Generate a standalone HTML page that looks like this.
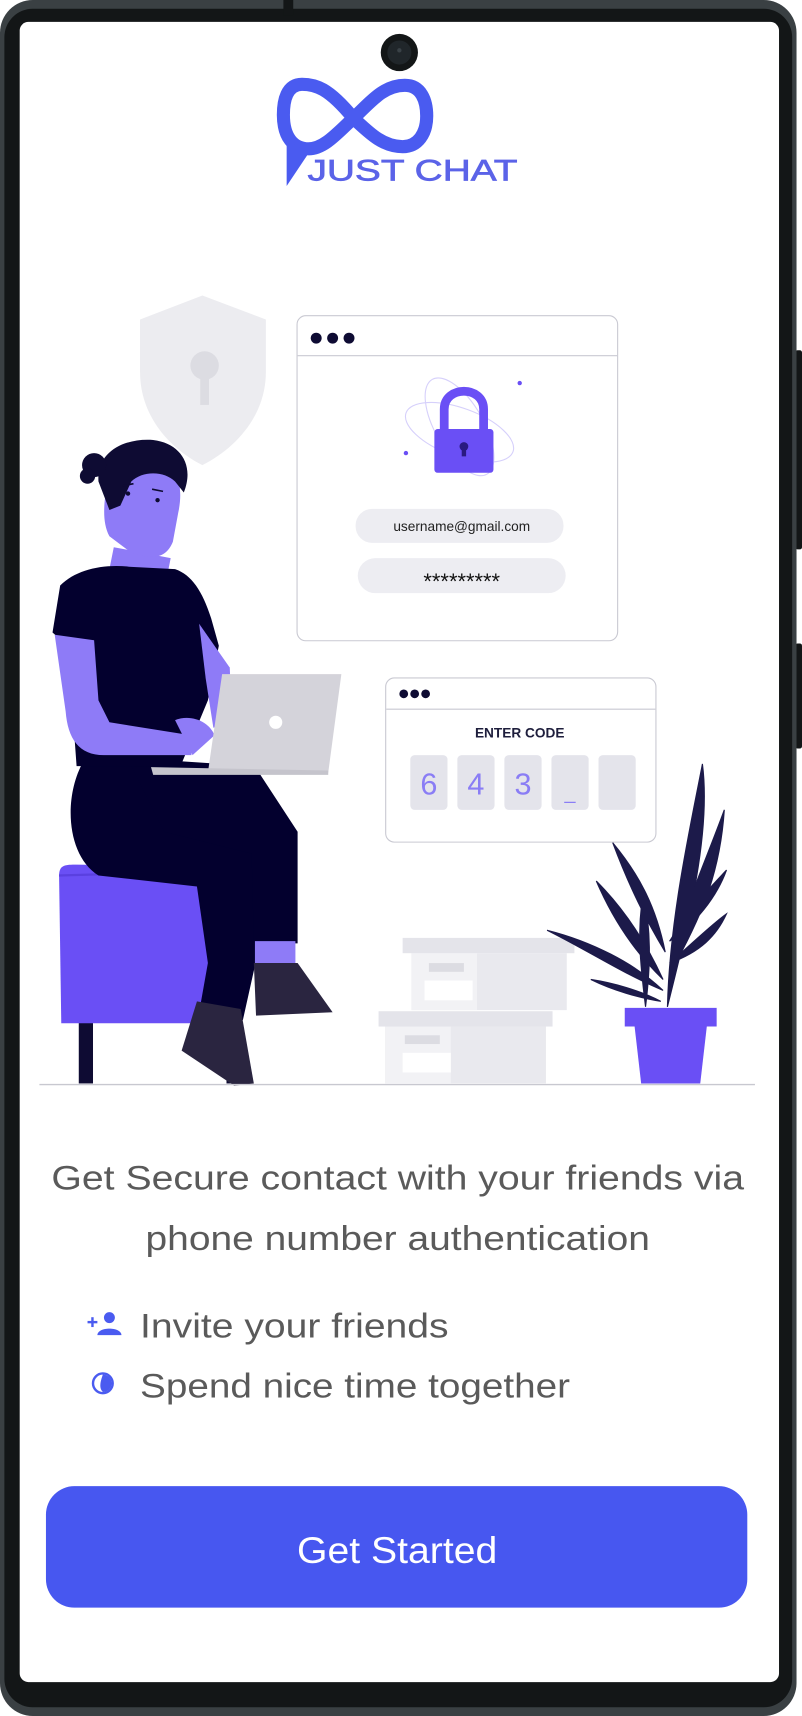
<!DOCTYPE html>
<html><head><meta charset="utf-8"><style>html,body{margin:0;padding:0;background:#fff}svg{display:block}</style></head>
<body>
<svg width="802" height="1716" viewBox="0 0 733 1568" preserveAspectRatio="none" xmlns="http://www.w3.org/2000/svg" font-family="Liberation Sans, sans-serif">
<rect x="0" y="0" width="733" height="1568" fill="#fff"/>
<rect x="727" y="320" width="6" height="182" rx="2" fill="#131617"/>
<rect x="727" y="588" width="6" height="96" rx="2" fill="#131617"/>
<rect x="0" y="0" width="728" height="1568" rx="30" fill="#3a4043"/>
<rect x="4" y="8" width="720" height="1552" rx="26" fill="#131617"/>
<rect x="259" y="0" width="9" height="14" fill="#131617"/>
<rect x="18" y="20" width="694" height="1517" rx="8" fill="#fff"/>
<circle cx="365" cy="48" r="17" fill="#131617"/><circle cx="365" cy="48" r="11" fill="#20262a"/><circle cx="365" cy="46" r="2" fill="#3a4247"/>
<!-- logo -->
<path d="M323 108 C300 80 288 77 276 77 C262 77 259 92 259 105 C259 125 268 136 282 136 C296 136 308 122 323 108 C338 94 350 78 370 78 C385 78 390 92 390 106 C390 122 382 134 368 134 C350 134 338 122 323 108" fill="none" stroke="#4a5bf0" stroke-width="12"/>
<path d="M262 128 L262 170 L282 140 Z" fill="#4a5bf0"/>
<text x="281" y="165" font-size="27" fill="#5b63e8" stroke="#5b63e8" stroke-width="0.6" textLength="192" lengthAdjust="spacingAndGlyphs">JUST CHAT</text>
<!-- shield -->
<path d="M185 270 L243 292 L243 340 C243 380 215 410 185 425 C155 410 128 380 128 340 L128 292 Z" fill="#ececf0"/>
<circle cx="187" cy="334" r="13" fill="#dcdce2"/><rect x="183" y="334" width="8" height="36" fill="#dcdce2"/>
<!-- window 1 -->
<rect x="271.5" y="288.5" width="293" height="297" rx="8" fill="#fff" stroke="#c9c9d2"/>
<line x1="272" y1="325" x2="564" y2="325" stroke="#c9c9d2"/>
<circle cx="289" cy="309" r="5" fill="#0e0b33"/><circle cx="304" cy="309" r="5" fill="#0e0b33"/><circle cx="319" cy="309" r="5" fill="#0e0b33"/>
<ellipse cx="420" cy="395" rx="52" ry="22" transform="rotate(20 420 395)" fill="none" stroke="#d6d0fb"/>
<ellipse cx="420" cy="390" rx="22" ry="50" transform="rotate(-30 420 390)" fill="none" stroke="#d6d0fb"/>
<path d="M406 396 L406 374 C406 352 442 352 442 374 L442 396" fill="none" stroke="#6a4ff5" stroke-width="8"/>
<rect x="397" y="392" width="54" height="40" rx="3" fill="#6a4ff5"/>
<circle cx="424" cy="408" r="4" fill="#2a1a80"/><rect x="422" y="408" width="4" height="9" fill="#2a1a80"/>
<circle cx="475" cy="350" r="2" fill="#6a4ff5"/><circle cx="371" cy="414" r="2" fill="#6a4ff5"/>
<rect x="325" y="465" width="190" height="31" rx="15" fill="#ededf2"/>
<text x="422" y="485" font-size="12.5" text-anchor="middle" fill="#222">username@gmail.com</text>
<rect x="327" y="510" width="190" height="32" rx="16" fill="#ededf2"/>
<text x="422" y="538" font-size="20" text-anchor="middle" fill="#111">*********</text>
<!-- window 2 -->
<rect x="352.5" y="619.5" width="247" height="150" rx="8" fill="#fff" stroke="#c9c9d2"/>
<line x1="353" y1="648" x2="599" y2="648" stroke="#c9c9d2"/>
<circle cx="369" cy="634" r="4" fill="#0e0b33"/><circle cx="379" cy="634" r="4" fill="#0e0b33"/><circle cx="389" cy="634" r="4" fill="#0e0b33"/>
<text x="475" y="674" font-size="12.5" font-weight="bold" text-anchor="middle" fill="#1e1e3c">ENTER CODE</text>
<rect x="375" y="690" width="34" height="50" rx="4" fill="#e4e4eb"/>
<rect x="418" y="690" width="34" height="50" rx="4" fill="#e4e4eb"/>
<rect x="461" y="690" width="34" height="50" rx="4" fill="#e4e4eb"/>
<rect x="504" y="690" width="34" height="50" rx="4" fill="#e4e4eb"/>
<rect x="547" y="690" width="34" height="50" rx="4" fill="#e4e4eb"/>
<g font-size="28" fill="#8a7df5" text-anchor="middle"><text x="392" y="726">6</text><text x="435" y="726">4</text><text x="478" y="726">3</text><text x="521" y="730" font-size="18">_</text></g>
<!-- boxes -->
<rect x="368" y="857" width="157" height="14" fill="#e4e4ea"/>
<rect x="376" y="871" width="142" height="52" fill="#e9e9ee"/><rect x="376" y="871" width="60" height="52" fill="#f2f2f5"/>
<rect x="392" y="880" width="32" height="8" fill="#dcdce2"/><rect x="388" y="896" width="44" height="18" fill="#fff"/>
<rect x="346" y="924" width="159" height="14" fill="#e4e4ea"/>
<rect x="352" y="938" width="147" height="52" fill="#e9e9ee"/><rect x="352" y="938" width="60" height="52" fill="#f2f2f5"/>
<rect x="370" y="946" width="32" height="8" fill="#dcdce2"/><rect x="368" y="962" width="44" height="18" fill="#fff"/>
<!-- plant -->
<g fill="#1c1a4a" stroke="#1c1a4a">
<path d="M610 920 C612 840 630 760 642 698 C650 760 630 840 610 920Z"/>
<path d="M612 890 C620 840 640 800 662 740 C658 800 640 840 612 890Z"/>
<path d="M608 870 C600 830 585 800 560 770 C575 810 590 840 608 870Z"/>
<path d="M606 905 C580 880 540 860 500 850 C540 870 570 890 606 905Z"/>
<path d="M606 895 C590 860 570 830 545 805 C560 840 580 870 606 895Z"/>
<path d="M612 860 C630 830 650 810 664 795 C655 820 635 845 612 860Z"/>
<path d="M612 880 C635 860 650 845 664 835 C655 855 640 870 612 880Z"/>
<path d="M604 915 C585 905 560 898 540 895 C560 905 585 912 604 915Z"/>
<path d="M590 920 C585 880 582 850 588 815 C595 850 595 880 590 920Z"/>
</g>
<path d="M571 921 H655 V938 H571Z" fill="#6a4ff5"/>
<path d="M580 938 H646 L640 990 H586Z" fill="#6a4ff5"/>
<!-- stool -->
<rect x="72" y="930" width="13" height="60" fill="#0e0b33"/>
<rect x="207" y="930" width="13" height="60" fill="#0e0b33"/>
<path d="M54 800 C54 790 60 790 70 790 L190 792 L212 805 L212 935 L56 935 Z" fill="#6a4ff5"/>
<path d="M54 800 L190 796 L212 812" fill="none" stroke="#5a40e0" stroke-width="2"/>
<!-- person -->
<path d="M80 690 C58 720 58 780 90 800 L180 810 L190 880 L182 925 L222 932 L238 860 L232 700 Z" fill="#03002e"/>
<path d="M120 700 L236 705 L272 760 L272 862 L232 862 L230 780 L150 760 Z" fill="#03002e"/>
<path d="M233 860 H270 V882 H233Z" fill="#8e7bf7"/>
<path d="M232 880 H272 L304 925 L234 928Z" fill="#2a2540"/>
<path d="M180 915 L220 922 L232 990 L214 992 L166 960Z" fill="#2a2540"/>
<path d="M104 500 L98 530 L150 540 L156 510Z" fill="#8e7bf7"/>
<path d="M55 535 C70 520 95 515 120 518 L160 520 C175 525 185 540 193 565 L200 590 L190 640 L165 700 L70 700 L62 590 L48 578 Z" fill="#03002e"/>
<path d="M50 580 L86 585 L90 640 L100 660 L175 672 L175 690 L95 690 C72 690 62 675 60 650Z" fill="#8e7bf7"/>
<path d="M182 570 L210 610 L212 660 L195 665 L188 620Z" fill="#8e7bf7"/>
<path d="M160 658 C175 652 192 660 196 672 L176 690 Z" fill="#8e7bf7"/>
<!-- laptop -->
<path d="M203 616 L312 616 L300 706 L190 706 Z" fill="#d4d3da"/>
<path d="M138 701 L300 704 L300 708 L140 708 Z" fill="#c5c4cc"/>
<circle cx="252" cy="660" r="6" fill="#fff"/>
<!-- head -->
<path d="M98 440 C100 418 125 412 148 418 C162 424 168 445 163 468 L158 495 C152 510 140 512 120 505 L100 490 C92 475 96 455 98 440Z" fill="#8e7bf7"/>
<path d="M90 440 C88 412 115 400 140 402 C165 405 178 425 168 450 L160 440 C150 430 130 430 120 440 L110 462 L100 466 Z" fill="#0e0b33"/>
<circle cx="86" cy="425" r="11" fill="#0e0b33"/><circle cx="80" cy="435" r="7" fill="#0e0b33"/>
<circle cx="117" cy="451" r="2" fill="#0e0b33"/><circle cx="144" cy="457" r="2" fill="#0e0b33"/>
<path d="M112 444 L122 442 M139 447 L149 449" stroke="#0e0b33" stroke-width="1.5"/>
<!-- floor -->
<line x1="36" y1="991" x2="690" y2="991" stroke="#c8c8d0" stroke-width="1.2"/>
<!-- text -->
<g fill="#5a5a5a" font-size="31">
<text x="47" y="1087" textLength="633" lengthAdjust="spacingAndGlyphs">Get Secure contact with your friends via</text>
<text x="133" y="1142" textLength="461" lengthAdjust="spacingAndGlyphs">phone number authentication</text>
<text x="128" y="1222" textLength="282" lengthAdjust="spacingAndGlyphs">Invite your friends</text>
<text x="128" y="1277" textLength="393" lengthAdjust="spacingAndGlyphs">Spend nice time together</text>
</g>
<!-- icons -->
<g fill="#4a5bf0">
<circle cx="100" cy="1204" r="5"/>
<path d="M89 1220 C89 1212 111 1212 111 1220 Z"/>
<rect x="80" y="1207" width="9" height="2.2"/><rect x="83.4" y="1203.6" width="2.2" height="9"/>
</g>
<circle cx="94" cy="1264" r="9" fill="none" stroke="#4a5bf0" stroke-width="2.2"/>
<path d="M94 1256 A8 8 0 0 1 94 1272 C90 1268 92 1262 94 1256Z" fill="#4a5bf0"/>
<!-- button -->
<rect x="42" y="1358" width="641" height="111" rx="26" fill="#4757f0"/>
<text x="363" y="1428" font-size="34" fill="#fff" text-anchor="middle" textLength="183" lengthAdjust="spacingAndGlyphs">Get Started</text>
</svg>
</body></html>
